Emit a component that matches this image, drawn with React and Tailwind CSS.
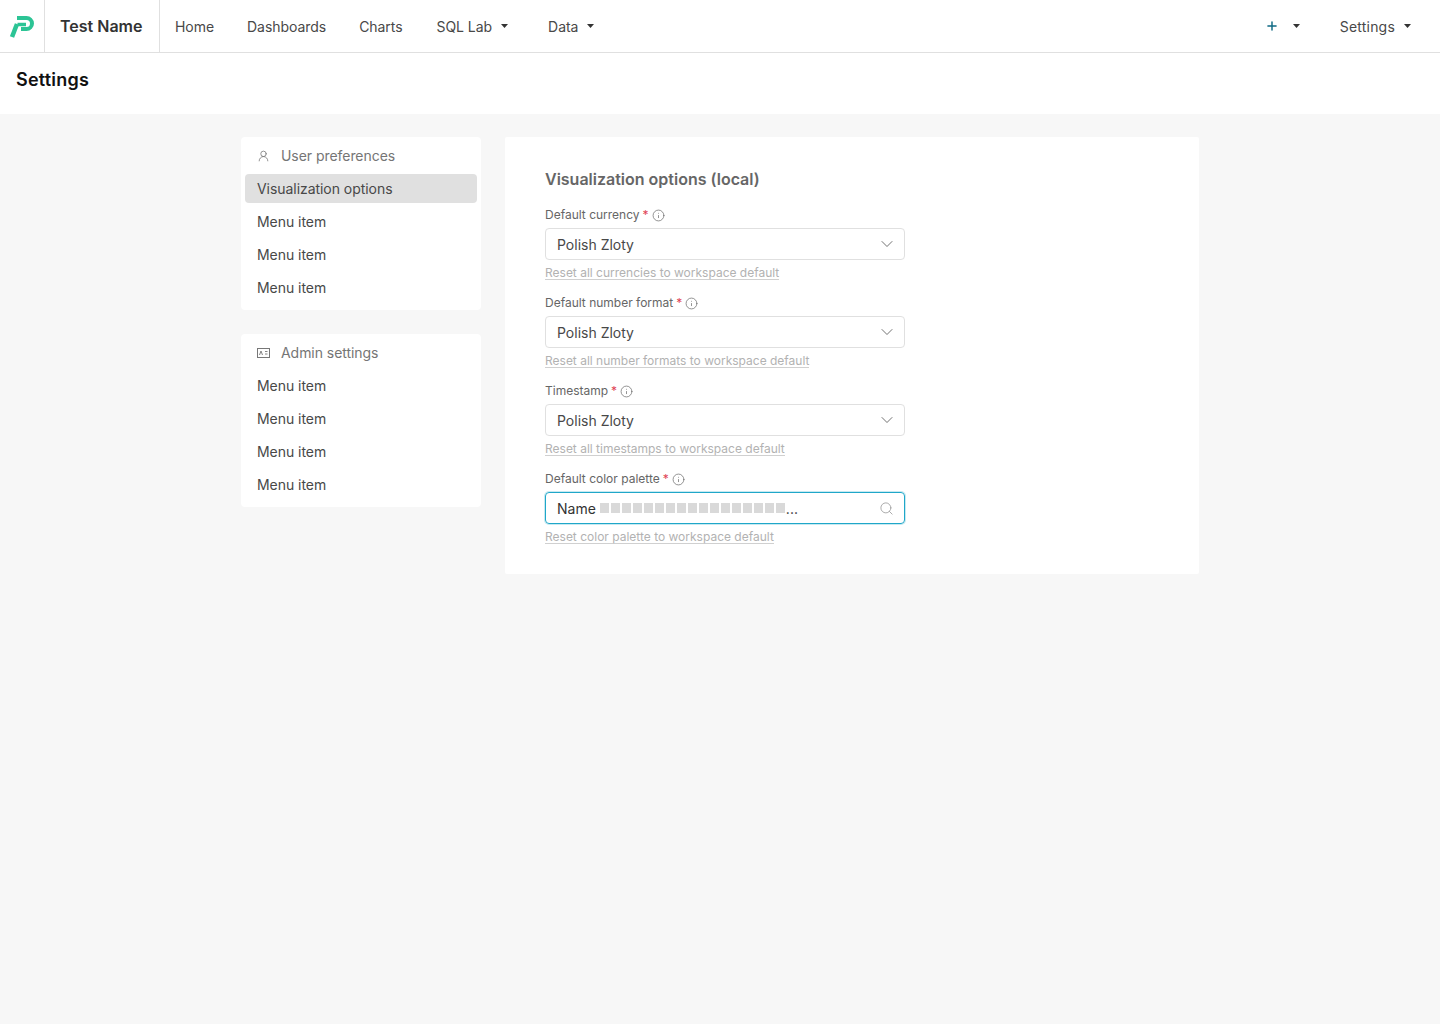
import { ChevronDown, Info, Plus, Search, UserRound } from 'lucide-react';

const font = { fontFamily: 'Inter, sans-serif' };

function Caret() {
  return (
    <svg width="7" height="4" viewBox="0 0 7 4" className="shrink-0">
      <path d="M0 0h7L3.500 4z" fill="#333" />
    </svg>
  );
}

function Logo() {
  return (
    <svg width="25" height="23" viewBox="0 0 25 23" fill="none">
      <path d="M8 3h9.500a5.500 5.500 0 0 1 0 11H12" stroke="#2cc495" strokeWidth="4" />
      <path d="M8.500 9.500h8.500" stroke="#2cc495" strokeWidth="3.500" />
      <path d="M8 9 3 22" stroke="#2cc495" strokeWidth="4.500" />
    </svg>
  );
}

function AdminIcon() {
  return (
    <svg width="13" height="10" viewBox="0 0 13 10" fill="none" className="shrink-0">
      <rect x="0.500" y="0.500" width="12" height="9" stroke="#777" />
      <path d="M2.500 7 4 3l1.500 4M8 3.500h2.500M8 6h2.500" stroke="#777" strokeWidth="0.900" />
    </svg>
  );
}

function NavLink({ children, caret, className = '' }) {
  return (
    <a className={`flex items-center gap-[9px] text-[14px] tracking-[-0.05px] text-[#484848] ${className}`}>
      {children}
      {caret && <Caret />}
    </a>
  );
}

function SideCard({ icon, title, items }) {
  return (
    <div className="bg-white rounded-[4px] w-[240px] px-1 pb-2">
      <div className="h-[37px] flex items-center gap-[11px] pl-3 text-[14px] tracking-[-0.05px] text-[#757575]">
        <span className="w-[13px] flex justify-center">{icon}</span>
        {title}
      </div>
      <div className="flex flex-col gap-1">
        {items.map((item, i) => (
          <div
            key={i}
            className={`h-[29px] flex items-center pl-3 rounded-[4px] text-[14px] tracking-[-0.05px] text-[#484848] ${item.active ? 'bg-[#e0e0e0]' : ''}`}
          >
            {item.label}
          </div>
        ))}
      </div>
    </div>
  );
}

function Field({ label, value, reset, focused }) {
  return (
    <div className="w-[360px] flex flex-col mb-[15px] last:mb-0">
      <div className="h-[16px] flex items-center text-[12px] text-[#666]">
        {label}
        <span className="ml-[3px] text-[#e04355]">*</span>
        <Info size={13} strokeWidth={1.3} className="ml-[3px] text-[#666]" />
      </div>
      {focused ? (
        <div className="mt-[5px] h-[32px] rounded-[4px] border border-[#20a7c9] shadow-[0_0_0_1px_rgba(32,167,201,0.25)] flex items-center justify-between pl-[11px] pr-[10px]">
          <div className="flex items-center text-[14px] text-[#333]">
            Name
            <span className="flex gap-[2px] ml-1">
              {Array.from({ length: 17 }).map((_, i) => (
                <span key={i} className="w-[9px] h-[10px] bg-[#d9d9d9]" />
              ))}
            </span>
            <span className="ml-[1px]">...</span>
          </div>
          <Search size={15} strokeWidth={1.3} className="text-[#999]" />
        </div>
      ) : (
        <div className="mt-[5px] h-[32px] rounded-[4px] border border-[#e0e0e0] flex items-center justify-between pl-[11px] pr-[7px] text-[14px] text-[#484848]">
          {value}
          <ChevronDown size={20} strokeWidth={1} className="text-[#555]" />
        </div>
      )}
      <div className="mt-[6px] h-[14px] flex">
        <a className="text-[12px] leading-[14px] text-[#b2b2b2] border-b border-[#d0d0d0]">{reset}</a>
      </div>
    </div>
  );
}

export default function App() {
  return (
    <div className="min-h-[1024px] bg-[#f7f7f7]" style={font}>
      <nav className="h-[53px] bg-white border-b border-[#e0e0e0] flex items-stretch">
        <div className="w-[45px] border-r border-[#e0e0e0] flex items-center justify-center pr-[1px]">
          <Logo />
        </div>
        <div className="w-[115px] border-r border-[#e0e0e0] flex items-center pl-[15px] text-[16px] font-semibold text-[#333]">
          Test Name
        </div>
        <div className="flex items-center pl-[15px]">
          <NavLink className="mr-[33px]">Home</NavLink>
          <NavLink className="mr-[33px]">Dashboards</NavLink>
          <NavLink className="mr-[34px]">Charts</NavLink>
          <NavLink caret className="mr-[40px]">SQL Lab</NavLink>
          <NavLink caret>Data</NavLink>
        </div>
        <div className="ml-auto flex items-center pr-[29px]">
          <Plus size={14} strokeWidth={2.5} className="text-[#0f6a84]" />
          <span className="ml-[14px] mr-[40px] flex"><Caret /></span>
          <NavLink caret><span className="tracking-[0.2px]">Settings</span></NavLink>
        </div>
      </nav>
      <div className="h-[61px] bg-white pl-4 pt-[15px]">
        <h1 className="text-[18px] leading-[24px] tracking-[0.2px] font-semibold text-[#111]">Settings</h1>
      </div>
      <main className="flex items-start gap-6 pl-[241px] pt-[23px]">
        <div className="flex flex-col gap-6">
          <SideCard
            icon={<UserRound size={14} strokeWidth={1.3} className="text-[#666]" />}
            title="User preferences"
            items={[{ label: 'Visualization options', active: true }, { label: 'Menu item' }, { label: 'Menu item' }, { label: 'Menu item' }]}
          />
          <SideCard
            icon={<AdminIcon />}
            title="Admin settings"
            items={[{ label: 'Menu item' }, { label: 'Menu item' }, { label: 'Menu item' }, { label: 'Menu item' }]}
          />
        </div>
        <section className="w-[694px] h-[437px] bg-white rounded-[2px] pl-10 pt-[31px]">
          <h2 className="text-[16px] leading-[22px] font-semibold text-[#666] mb-[17px]">Visualization options (local)</h2>
          <Field label="Default currency" value="Polish Zloty" reset="Reset all currencies to workspace default" />
          <Field label="Default number format" value="Polish Zloty" reset="Reset all number formats to workspace default" />
          <Field label="Timestamp" value="Polish Zloty" reset="Reset all timestamps to workspace default" />
          <Field label="Default color palette" focused reset="Reset color palette to workspace default" />
        </section>
      </main>
    </div>
  );
}
